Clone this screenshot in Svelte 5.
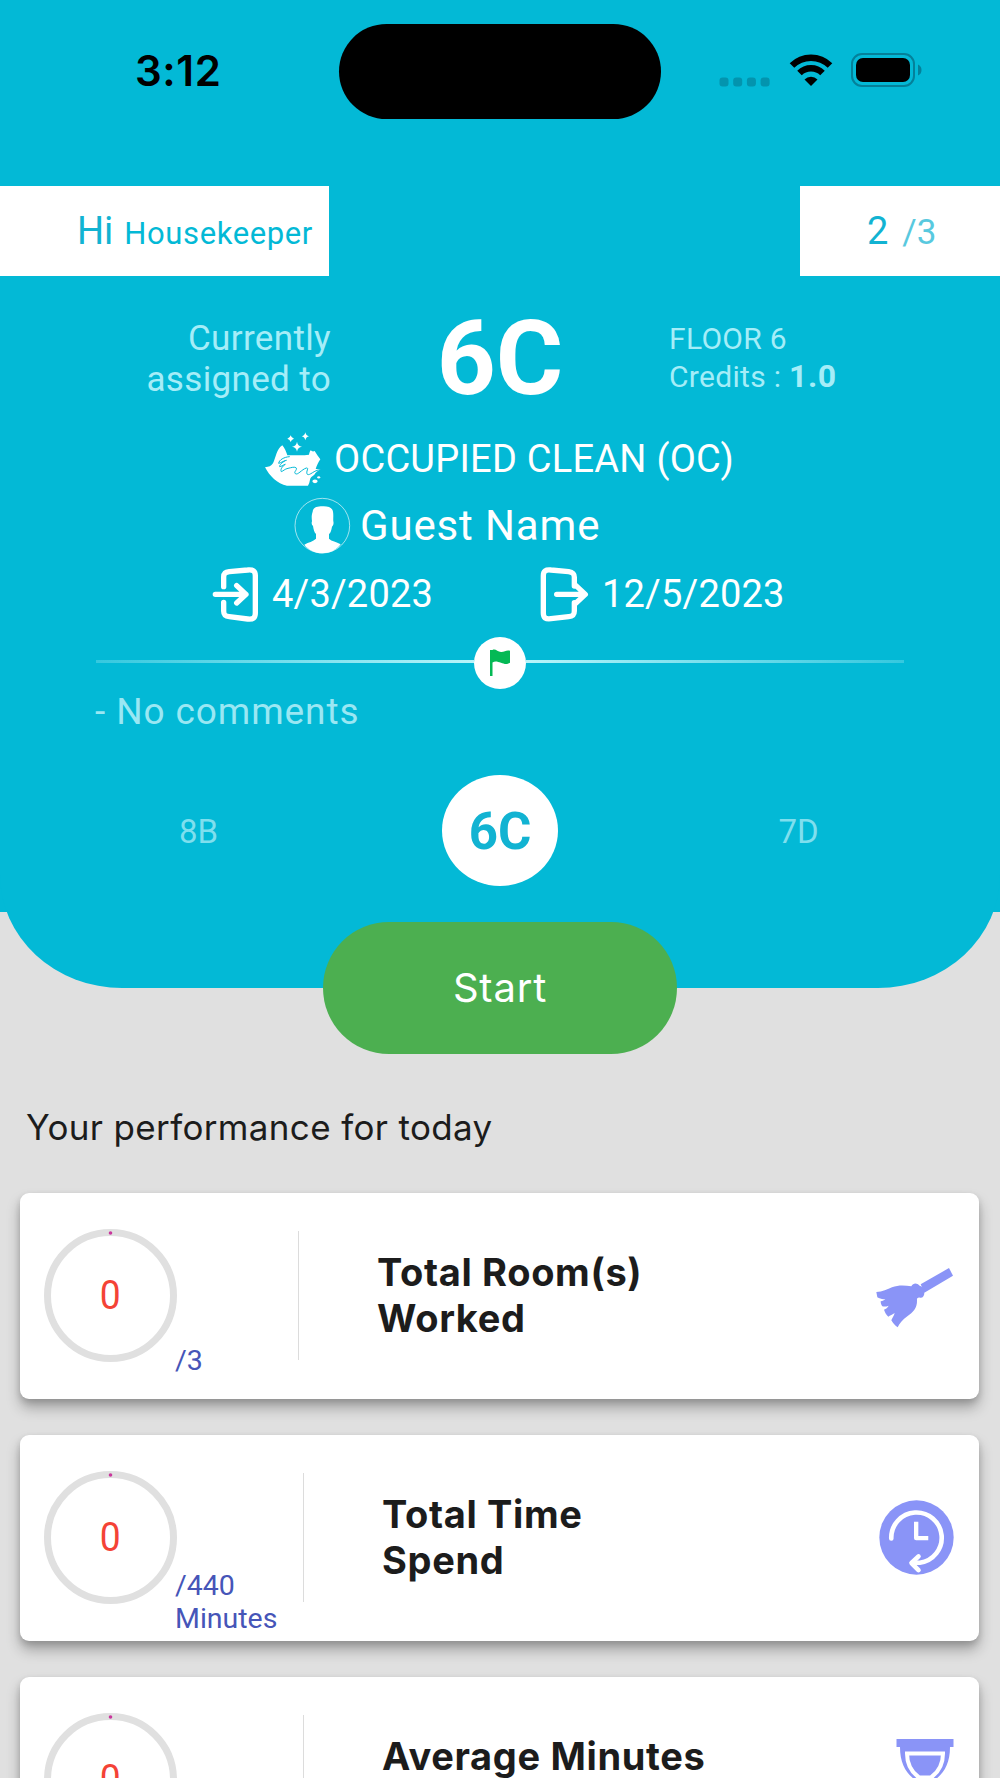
<script lang="ts">
    type Stat = {
        title: string[]
        value: number
        suffix: string[]
        icon: string
        split: number
    }

    const user = "Housekeeper"
    const room = {
        name: "6C",
        floor: "FLOOR 6",
        credits: "1.0",
        status: "OCCUPIED CLEAN (OC)",
        guest: "Guest Name",
        checkIn: "4/3/2023",
        checkOut: "12/5/2023",
        comments: "- No comments",
    }
    const stats: Stat[] = [
        { title: ["Total Room(s)", "Worked"], value: 0, suffix: ["/3"], icon: "broom", split: 279 },
        { title: ["Total Time", "Spend"], value: 0, suffix: ["/440", "Minutes"], icon: "clock", split: 284 },
        { title: ["Average Minutes"], value: 0, suffix: [], icon: "hourglass", split: 284 },
    ]
</script>

<main>
    <header>
        <div class="statusbar">
            <span class="time">3:12</span>
            <div class="island"></div>
            <div class="signals">
                <svg class="dots" width="52" height="10" viewBox="0 0 52 10">
                    {#each [0, 1, 2, 3] as i}
                        <rect x={i * 13.7 + 0.5} y="0.5" width="9" height="9" rx="3" />
                    {/each}
                </svg>
                <svg class="wifi" width="44" height="34" viewBox="0 0 44 34">
                    <path d="M3 12.5a27 27 0 0 1 38 0" />
                    <path d="M10.5 20a16.5 16.5 0 0 1 23 0" />
                    <path class="tip" d="M22 33l-6.5-6.5a9.3 9.3 0 0 1 13 0z" />
                </svg>
                <svg class="battery" width="71" height="34" viewBox="0 0 71 34">
                    <rect class="shell" x="1" y="1" width="62" height="32" rx="10" />
                    <rect x="5" y="5" width="54" height="24" rx="7" />
                    <path class="nub" d="M67 11.5q3.5 1.5 3.5 5.5t-3.5 5.5z" />
                </svg>
            </div>
        </div>

        <div class="welcome">
            <div class="hi"><span class="big">Hi</span><span class="user">{user}</span></div>
            <div class="count"><span class="done">2</span><span class="all">/3</span></div>
        </div>

        <div class="room">
            <div class="assigned">Currently<br />assigned to</div>
            <div class="number">{room.name}</div>
            <div class="info">{room.floor}<br />Credits : <b>{room.credits}</b></div>
        </div>

        <div class="occupancy">
            <svg width="58" height="54" viewBox="174 12 174 162">
                <g fill="#fff">
                    <path d="M229 52C236 60 241 72 244 82C262 80 285 84 309 80C310 74 312 69 314 67C318 71 322 71 326 69C331 77 337 86 343 94C337 103 332 113 329 123L344 124C335 129 328 134 325 140C318 145 313 148 312 155C311 162 309 168 306 173H243C214 168 190 143 177 118C189 117 195 114 201 106C209 91 212 62 229 52z" />
                    <path d="M273 41q2 13 15 15-13 2-15 15-2-13-15-15 13-2 15-15zM254 22q2 8 10 10-8 2-10 10-2-8-10-10 8-2 10-10zM298 13q2 10 11 12-9 2-11 12-2-10-11-12 9-2 11-12z" />
                    <ellipse cx="338" cy="148" rx="4.5" ry="3.5" />
                    <ellipse cx="327" cy="160" rx="8" ry="5.5" />
                </g>
                <g fill="none" stroke="#03b9d6" stroke-width="3" stroke-linecap="round" stroke-linejoin="round">
                    <path d="M250 86C234 87 219 96 218 106C224 105 231 99 241 97" />
                    <path d="M236 99C228 104 220 111 221 116C226 116 230 111 238 109C229 115 222 124 226 131C232 129 236 123 246 121C256 119 266 115 271 120C274 126 262 132 268 137C276 142 286 125 301 120C311 119 298 131 304 139C312 144 323 126 343 125" />
                </g>
            </svg>
            <span>{room.status}</span>
        </div>

        <div class="guest">
            <svg width="57" height="57" viewBox="264 208 171 171">
                <circle cx="349" cy="294" r="82" fill="none" stroke="#fff" stroke-opacity=".75" stroke-width="2.5" />
                <path fill="#fff" d="M320 252c1-12 12-16 29-16 15-1 30 3 32 16 2 12 0 20 1 29 2 8-1 13-4 16-2 13-5 19-9 22v14c8 8 22 9 35 17-12 17-33 27-55 27s-42-10-54-26c13-8 26-9 35-18v-14c-6-6-7-13-9-24-4-3-5-9-3-14-1-10-2-17 2-29z" />
            </svg>
            <span>{room.guest}</span>
        </div>

        <div class="dates">
            <div class="date in">
                <svg width="48" height="57" viewBox="18 412 144 171">
                    <path d="M53 474v-28c0-13 5-15 17-17l55-5c16-2 23 3 23 17v112c0 15-7 20-23 18l-55-7c-12-1-17-5-17-17v-26" />
                    <path d="M28 497h92M92 471l28 26-28 26" />
                </svg>
                <span>{room.checkIn}</span>
            </div>
            <div class="date out">
                <svg width="50" height="57" viewBox="0 0 150 171">
                    <path d="M103 60V34c0-11-5-15-17-17L33 12C17 10 10 15 10 29v112c0 15 7 19 23 17l53-6c12-1 17-5 17-17v-25" />
                    <path d="M50 85h85M108 59l28 26-28 26" />
                </svg>
                <span>{room.checkOut}</span>
            </div>
        </div>

        <div class="divider">
            <i class="line left"></i>
            <div class="flag">
                <svg width="22" height="28" viewBox="0 0 22 28">
                    <path d="M1 1h2.5c3-1.5 5 1.8 8.5 2s5.5-2.5 9-1.2v12c-4 2.5-6 .8-9 0-3.5-1-5.5-2-8.5-.3V27H1z" fill="#04b955" />
                </svg>
            </div>
            <i class="line right"></i>
        </div>

        <p class="comments">{room.comments}</p>

        <nav>
            <span class="prev">8B</span>
            <span class="current">{room.name}</span>
            <span class="next">7D</span>
        </nav>
    </header>

    <button>Start</button>

    <h2>Your performance for today</h2>

    <section>
        {#each stats as stat}
            <article>
                <div class="left" style={`width: ${stat.split}px;`}>
                    <div class="ring">
                        <svg width="133" height="133" viewBox="0 0 133 133">
                            <circle cx="66.5" cy="66.5" r="63" fill="none" stroke="#e0e0e0" stroke-width="7" />
                            <circle cx="66.5" cy="4" r="1.8" fill="#c9379d" />
                        </svg>
                        <span>{stat.value}</span>
                    </div>
                    <div class="suffix">
                        {#each stat.suffix as line}
                            <span>{line}</span>
                        {/each}
                    </div>
                </div>
                <div class="title">
                    {#each stat.title as line}
                        <span>{line}</span>
                    {/each}
                </div>
                {#if stat.icon === "broom"}
                    <svg class="broom" width="78" height="60" viewBox="46 57 234 180">
                        <path fill="#8a94f7" d="M180 106l85-49 12 23-86 51z" />
                        <path fill="#8a94f7" d="M152 112c6-11 17-10 25-2 10 3 15 12 14 21 0 9-4 16-13 15-7-1-10 2-9 8 1 23-12 37-29 48-14 10-23 20-29 33-9-6-14-13-19-21 3-8 8-14 10-22-6 5-14 7-19 11-6-5-10-13-13-21 6-3 11-6 14-12-7 3-13 3-19 2-3-4-5-9-5-15 6-1 10-3 14-7-8 2-17-1-24-5l-3-16c18 0 34-8 47-14 20-8 39-6 58-3z" />
                    </svg>
                {:else if stat.icon === "clock"}
                    <svg width="75" height="75" viewBox="58 58 226 226">
                        <circle cx="171" cy="171" r="112" fill="#8a94f7" />
                        <g fill="none" stroke="#fff" stroke-width="14" stroke-linecap="round" stroke-linejoin="round">
                            <path d="M95 174a76 76 0 1 1 86 73h-23" />
                            <path d="M177 228l-21 20 21 21" />
                            <path d="M170 130v43h30" stroke-linecap="square" stroke-width="13" />
                        </g>
                    </svg>
                {:else}
                    <svg class="hourglass" width="58" height="80" viewBox="0 0 58 80">
                        <path fill="#8a94f7" d="M.5 0h57v8H54c0 15-5 25-14 32 9 7 14 17 14 32h3.5v8H.5v-8H4c0-15 5-25 14-32C9 33 4 23 4 8H.5z" />
                        <path fill="none" stroke="#fff" stroke-width="4" d="M11 14.500h36c0 11-5 19-12 24H23c-7-5-12-13-12-24zM23 43h12c7 4 12 11 12 22H11c0-11 5-18 12-22z" />
                    </svg>
                {/if}
            </article>
        {/each}
    </section>
</main>

<style>
    :global(body) {
        margin: 0;
    }
    main {
        display: flex;
        flex-direction: column;
        width: 1000px;
        height: 1778px;
        overflow: hidden;
        background: linear-gradient(#03b9d6 912px, #e0e0e0 912px);
        font-family: Roboto, "Liberation Sans", sans-serif;
    }
    svg {
        flex: none;
        display: block;
    }
    header {
        flex: none;
        height: 988px;
        background: #03b9d6;
        border-radius: 0 0 122px 122px / 0 0 113px 113px;
        color: #fff;
    }
    .statusbar {
        display: grid;
        grid-template-columns: 339px 322px 339px;
        height: 162px;
        padding-top: 24px;
        color: #000;
    }
    .time {
        padding-left: 135px;
        font: 600 42px/93px Inter, sans-serif;
        letter-spacing: 0.6px;
    }
    .island {
        height: 95px;
        border-radius: 48px;
        background: #000;
    }
    .signals {
        display: flex;
        align-items: center;
        height: 92px;
        padding-left: 58px;
    }
    .dots {
        margin: 23px 18px 0 0;
        fill: #0394ae;
    }
    .wifi {
        margin-right: 18px;
        fill: none;
        stroke: #000;
        stroke-width: 6.5px;
    }
        .wifi .tip {
            fill: #000;
            stroke: none;
        }
    .battery .shell {
        fill: none;
        stroke: #04819a;
        stroke-width: 2px;
    }
    .battery .nub {
        fill: #04819a;
    }
    .welcome {
        display: flex;
        justify-content: space-between;
        height: 90px;
        line-height: 91px;
        color: #12b3d2;
    }
        .hi, .count {
            display: flex;
            align-items: baseline;
            box-sizing: border-box;
            background: #fff;
            white-space: nowrap;
        }
    .hi {
        width: 329px;
        padding-left: 77px;
    }
    .big, .done {
        font-size: 38px;
    }
    .user {
        margin-left: 11px;
        font-size: 31px;
        letter-spacing: 0.6px;
        color: #03b9d6;
    }
    .count {
        width: 200px;
        padding-left: 67px;
    }
    .all {
        margin-left: 14px;
        font-size: 35px;
        opacity: 0.7;
    }
    .room {
        display: grid;
        grid-template-columns: 331px 338px 1fr;
        align-items: center;
        height: 135px;
        padding-top: 15px;
    }
    .assigned {
        text-align: right;
        font-size: 35px;
        line-height: 41px;
        letter-spacing: 0.35px;
        color: #a5edf8;
    }
    .number {
        text-align: center;
        font-size: 103px;
        line-height: 120px;
        font-weight: 700;
    }
    .info {
        padding-bottom: 1px;
        font-size: 30px;
        line-height: 38px;
        letter-spacing: 0.3px;
        color: #a5edf8;
    }
        .info b {
            font-size: 32px;
            line-height: 30px;
            letter-spacing: 0.6px;
        }
    .occupancy, .guest, .dates, .date {
        display: flex;
        align-items: center;
    }
    .occupancy {
        height: 66px;
        padding-left: 264px;
        font-size: 38px;
        letter-spacing: 0.25px;
    }
        .occupancy span {
            margin: -1px 0 0 12px;
        }
    .guest {
        height: 67px;
        padding-left: 294px;
        font-size: 42px;
        letter-spacing: 0.85px;
    }
        .guest span {
            margin-left: 9px;
        }
    .dates {
        height: 70px;
        padding-left: 212px;
        font-size: 38px;
        letter-spacing: 0.2px;
    }
        .dates path {
            fill: none;
            stroke: #fff;
            stroke-width: 16px;
            stroke-linecap: round;
            stroke-linejoin: round;
        }
    .in {
        width: 328px;
    }
        .in span, .out span {
            margin-left: 12px;
        }
    .divider {
        display: flex;
        align-items: center;
        height: 68px;
        padding: 0 96px;
    }
    .line {
        flex: 1;
        height: 3px;
        margin-top: -3px;
    }
    .left.line {
        background: linear-gradient(90deg, #35c8df, #b8f4fa);
    }
    .right.line {
        background: linear-gradient(270deg, #35c8df, #b8f4fa);
    }
    .flag {
        display: flex;
        align-items: center;
        justify-content: center;
        width: 52px;
        height: 52px;
        border-radius: 50%;
        background: #fff;
    }
    .comments {
        margin: 0;
        padding-left: 95px;
        font-size: 37px;
        line-height: 30px;
        letter-spacing: 0.9px;
        color: #9ae7f3;
    }
    nav {
        display: grid;
        grid-template-columns: 397px 206px 391px;
        align-items: center;
        justify-items: center;
        padding-top: 48px;
        font-size: 33px;
        color: #7fdfee;
    }
    .prev, .next {
        padding-top: 2px;
    }
    .current {
        width: 116px;
        height: 111px;
        border-radius: 50%;
        background: #fff;
        text-align: center;
        font-size: 51px;
        font-weight: 700;
        line-height: 114px;
        color: #12b3d2;
    }
    button {
        flex: none;
        align-self: center;
        width: 354px;
        height: 132px;
        margin-top: -66px;
        padding: 0;
        border: none;
        border-radius: 66px;
        background: #4caf50;
        color: #fff;
        font: 400 40px/132px Inter, sans-serif;
        letter-spacing: 0.8px;
    }
    h2 {
        margin: 50px 0 0 26px;
        font: 400 35px/46px Inter, sans-serif;
        letter-spacing: 0.35px;
        color: #1c1c1c;
    }
    section {
        display: flex;
        flex-direction: column;
        gap: 36.5px;
        margin-top: 43px;
        padding: 0 21px 0 20px;
    }
    article {
        display: flex;
        flex: none;
        align-items: center;
        box-sizing: border-box;
        height: 205.5px;
        padding-right: 25px;
        border-radius: 9px;
        background: #fff;
        box-shadow: 0 9px 14px rgba(0, 0, 0, 0.28), 0 3px 6px rgba(0, 0, 0, 0.14);
    }
        article .left {
            display: flex;
            align-items: center;
            box-sizing: border-box;
            height: 129px;
            padding-left: 24px;
            border-right: 1px solid #dcdcdc;
        }
    .ring {
        display: grid;
        flex: none;
        place-items: center;
        font-size: 40px;
        line-height: 46px;
        color: #f44336;
    }
        .ring > * {
            grid-area: 1 / 1;
        }
    .ring span {
        transform: scaleX(0.93);
    }
    .suffix {
        display: flex;
        flex-direction: column;
        margin-top: 129px;
        margin-left: -2px;
        font-size: 28.5px;
        line-height: 33.5px;
        color: #4655b8;
    }
    .title {
        display: flex;
        flex: 1;
        flex-direction: column;
        min-height: 93px;
        padding-left: 78px;
        font: 650 38px/46px Inter, sans-serif;
        letter-spacing: 0.65px;
        color: #1c1c1c;
        white-space: nowrap;
    }
    .broom {
        margin-top: 5px;
    }
    .hourglass {
        margin-top: -2px;
    }
</style>
